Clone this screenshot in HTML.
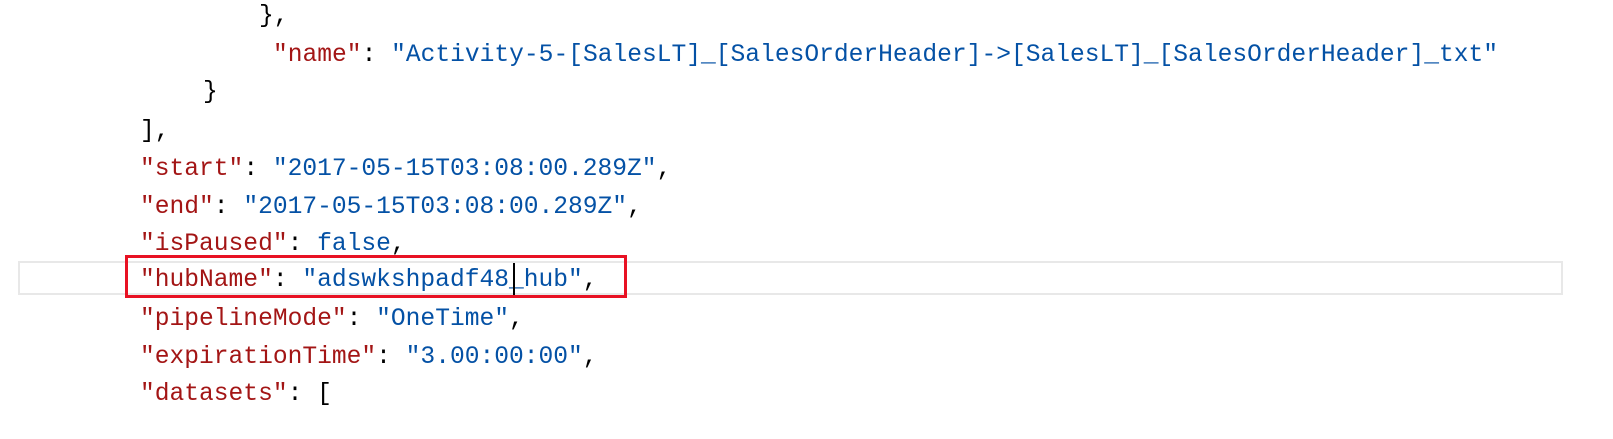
<!DOCTYPE html>
<html><head><style>
body{margin:0;width:1613px;height:439px;background:#fff;overflow:hidden;position:relative;font-family:"Liberation Mono",monospace;font-size:24.6px;}
.l{position:absolute;white-space:pre;height:38px;line-height:38px;color:#000}
.k{color:#a31515}.s{color:#0451a5}
#hl{position:absolute;left:18px;top:261px;width:1545px;height:34px;border:2px solid #e8e8e8;box-sizing:border-box}
#rb{position:absolute;left:125px;top:255px;width:502px;height:43px;border:3px solid #e81123;box-sizing:border-box}
#cur{position:absolute;left:513px;top:263px;width:2px;height:32px;background:#000}
</style></head><body>
<div id="hl"></div>
<div class="l" style="left:259px;top:-2px">},</div>
<div class="l" style="left:273px;top:37px"><span class="k">"name"</span>: <span class="s">"Activity-5-[SalesLT]_[SalesOrderHeader]-&gt;[SalesLT]_[SalesOrderHeader]_txt"</span></div>
<div class="l" style="left:203px;top:74px">}</div>
<div class="l" style="left:140px;top:113px">],</div>
<div class="l" style="left:140px;top:151px"><span class="k">"start"</span>: <span class="s">"2017-05-15T03:08:00.289Z"</span>,</div>
<div class="l" style="left:140px;top:189px"><span class="k">"end"</span>: <span class="s">"2017-05-15T03:08:00.289Z"</span>,</div>
<div class="l" style="left:140px;top:226px"><span class="k">"isPaused"</span>: <span class="s">false</span>,</div>
<div class="l" style="left:140px;top:262px"><span class="k">"hubName"</span>: <span class="s">"adswkshpadf48_hub"</span>,</div>
<div class="l" style="left:140px;top:301px"><span class="k">"pipelineMode"</span>: <span class="s">"OneTime"</span>,</div>
<div class="l" style="left:140px;top:339px"><span class="k">"expirationTime"</span>: <span class="s">"3.00:00:00"</span>,</div>
<div class="l" style="left:140px;top:376px"><span class="k">"datasets"</span>: [</div>
<div id="rb"></div>
<div id="cur"></div>
</body></html>
